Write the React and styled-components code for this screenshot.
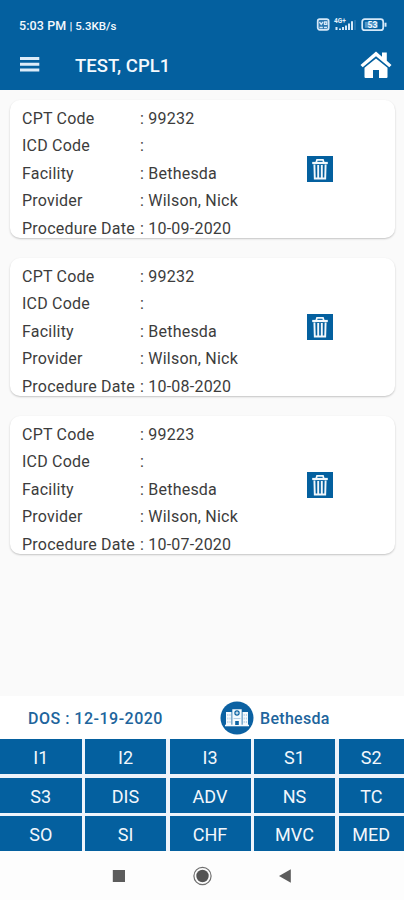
import styled, { createGlobalStyle } from "styled-components";

const GlobalStyle = createGlobalStyle`
  * {
    box-sizing: border-box;
  }

  body {
    margin: 0;
    background: #fafafa;
    font-family: Roboto, "Liberation Sans", sans-serif;
  }

  svg {
    display: block;
    flex: none;
  }
`;

const Screen = styled.div`
  display: flex;
  flex-direction: column;
  width: 100%;
  height: 900px;
  overflow: hidden;
`;

const Header = styled.header`
  height: 90px;
  flex: none;
  color: #f4f9fd;
  background: #04609f;
`;

const StatusBar = styled.div`
  display: flex;
  align-items: center;
  justify-content: space-between;
  height: 40px;
  padding: 10px 16px 0 19px;
`;

const StatusText = styled.span`
  font-size: ${({ small }) => (small ? "11.5px" : "12.5px")};
  font-weight: 500;
  letter-spacing: ${({ small }) => (small ? "0" : "0.1px")};
  white-space: pre;
`;

const StatusLeft = styled.div`
  display: flex;
  align-items: baseline;
`;

const AppBar = styled.div`
  display: flex;
  align-items: center;
  height: 50px;
  padding: 0 12px 0 20px;
`;

const Title = styled.h1`
  flex: 1;
  margin: 2px 0 0 35px;
  font-size: 18.5px;
  line-height: 24px;
  font-weight: 500;
`;

const List = styled.main`
  display: flex;
  flex: 1;
  flex-direction: column;
  gap: 20px;
  padding: 10px 9px 0 10px;
`;

const Card = styled.article`
  display: flex;
  height: 138px;
  padding: 4.5px 0 0 12px;
  border-radius: 10px;
  background: #fff;
  box-shadow: 0 1px 2px rgba(0, 0, 0, 0.22);
`;

const Fields = styled.dl`
  width: 284.5px;
  margin: 0;
`;

const Field = styled.div`
  display: flex;
  height: 27.5px;
  font-size: 16px;
  line-height: 27.5px;
  letter-spacing: 0.22px;
  color: #3c3c3c;
  white-space: nowrap;

  dt {
    width: 118px;
  }

  dd {
    margin: 0;
  }
`;

const DeleteButton = styled.button`
  display: flex;
  align-items: center;
  justify-content: center;
  width: 26px;
  height: 26px;
  margin: 51.5px 0 0;
  padding: 0;
  border: none;
  background: #04609f;
`;

const VisitBar = styled.div`
  display: flex;
  align-items: center;
  height: 43px;
  padding-left: 28px;
  font-size: 16px;
  font-weight: 500;
  letter-spacing: 0.3px;
  color: #20649c;
  background: #fff;
`;

const VisitDate = styled.span`
  width: 192px;
  margin-top: 2px;
  letter-spacing: 0.5px;
  white-space: pre;
`;

const Facility = styled.span`
  margin: 2px 0 0 6px;
`;

const CodeGrid = styled.div`
  display: grid;
  grid-template-columns: 81.5px 81px 81px 81px 1fr;
  grid-template-rows: repeat(3, 35px);
  gap: 3.5px;
  background: #eef4fb;
`;

const CodeButton = styled.button`
  padding: 2px 0 0;
  border: none;
  font-family: inherit;
  font-size: 18px;
  color: #f2f7fc;
  background: #04609f;
`;

const NavBar = styled.nav`
  display: flex;
  align-items: center;
  height: 49px;
  padding: 0 0 0 112px;
  gap: 66px;
  background: #fdfdfd;
`;

const StatusIcons = () => (
  <svg width="72" height="16" viewBox="0 0 72 16" fill="none">
    <rect x="1.7" y="2.2" width="11" height="10.6" rx="2" fill="#2c78b0" stroke="#d5e8f8" strokeWidth="1.7" />
    <path d="M3.5 5l1.7 2.4L7 5M8.5 8V5h2.3v2.3H8.5M3.5 10.5h3.3M8 10.5h3" stroke="#d5e8f8" strokeWidth="1.3" />
    <text x="18" y="6" fontSize="6.5" fontWeight="700" fill="#e3f0fb">4G+</text>
    <path d="M20.5 10v3M24 11.5V13M27 10v3M30 8.5V13M33 6.5V13M36 4.2V13" stroke="#d5e8f8" strokeWidth="2" />
    <path d="M39 3v10" stroke="#4288bd" strokeWidth="1" />
    <rect x="46.2" y="2.2" width="21" height="11" rx="2.5" stroke="#d5e8f8" strokeWidth="1.7" />
    <rect x="48.8" y="4.8" width="13" height="6" fill="#5798c8" />
    <text x="51.5" y="10.8" fontSize="8.5" fontWeight="700" fill="#f0f8ff">53</text>
    <path d="M69.5 5.7v4" stroke="#d5e8f8" strokeWidth="2" />
  </svg>
);

const MenuIcon = () => (
  <svg width="20" height="18" viewBox="0 0 20 18" fill="#dcecf9">
    <path d="M0 1h19.3v3H0zM0 6.7h19.3v3H0zM0 12.4h19.3v3H0z" />
  </svg>
);

const HomeIcon = () => (
  <svg width="32" height="28" viewBox="0 0 32 28" fill="#fff">
    <path d="M16 .5L22 5.7V1.5h4.8v8.3l4.7 4.1-2.2 2.3L16 5.2 2.7 16.2.5 13.9z" />
    <path d="M16 7.5l11.5 9.3V26a1 1 0 0 1-1 1H19v-8h-6v8H5.5a1 1 0 0 1-1-1v-9.2z" />
  </svg>
);

const TrashIcon = () => (
  <svg width="26" height="26" viewBox="0 0 26 26" fill="none" stroke="#f3f8fc">
    <path d="M9.2 6.5L10 3.8h6l.8 2.7" strokeWidth="1.7" />
    <path d="M5.2 7h15.6" strokeWidth="2.2" />
    <path d="M7.4 8.5l.4 14h10.4l.4-14M11.2 9v13M14.8 9v13" strokeWidth="1.9" />
  </svg>
);

const HospitalIcon = () => (
  <svg width="34" height="34" viewBox="0 0 34 34">
    <circle cx="17" cy="17" r="16.5" fill="#0b61a2" />
    <path d="M6 11h5.5v14H6zM22.5 11H28v14h-5.5zM12.3 8.3h9.4V25h-9.4z" fill="#f5f9fd" />
    <path d="M5 24.5h24" stroke="#f5f9fd" strokeWidth="1.6" />
    <path d="M7.8 13v9M10 13v9M24.2 13v9M26.4 13v9" stroke="#b4cee4" strokeWidth="1" strokeDasharray="2 1.5" />
    <circle cx="17" cy="12" r="2.7" fill="#0b61a2" />
    <path d="M17 10.4v3.2M15.4 12h3.2" stroke="#fff" strokeWidth="1" />
    <path d="M15.2 20h3.6v4h-3.6z" fill="#0b61a2" />
    <path d="M13.5 17.5h7" stroke="#b4cee4" />
  </svg>
);

const RecentsIcon = () => (
  <svg width="14" height="14" viewBox="0 0 14 14">
    <path d="M.8 1H13v12H.8z" fill="#5c5c5c" />
  </svg>
);

const CircleIcon = () => (
  <svg width="20" height="20" viewBox="0 0 20 20">
    <circle cx="10.5" cy="10" r="8.6" fill="none" stroke="#707070" strokeWidth="1.2" />
    <circle cx="10.5" cy="10" r="6.2" fill="#555" />
  </svg>
);

const BackIcon = () => (
  <svg width="14" height="14" viewBox="0 0 14 14">
    <path d="M12.8.3v13.4L1 7z" fill="#5c5c5c" />
  </svg>
);

const procedures = [
  { cpt: "99232", date: "10-09-2020" },
  { cpt: "99232", date: "10-08-2020" },
  { cpt: "99223", date: "10-07-2020" },
];

const codes = [
  "I1", "I2", "I3", "S1", "S2",
  "S3", "DIS", "ADV", "NS", "TC",
  "SO", "SI", "CHF", "MVC", "MED",
];

const ProcedureCard = ({ cpt, date }) => {
  const fields = [
    ["CPT Code", cpt],
    ["ICD Code", ""],
    ["Facility", "Bethesda"],
    ["Provider", "Wilson, Nick"],
    ["Procedure Date", date],
  ];

  return (
    <Card>
      <Fields>
        {fields.map(([label, value]) => (
          <Field key={label}>
            <dt>{label}</dt>
            <dd>: {value}</dd>
          </Field>
        ))}
      </Fields>
      <DeleteButton aria-label="Delete">
        <TrashIcon />
      </DeleteButton>
    </Card>
  );
};

const App = () => (
  <>
    <GlobalStyle />
    <Screen>
      <Header>
        <StatusBar>
          <StatusLeft>
            <StatusText>5:03 PM </StatusText>
            <StatusText small>| 5.3KB/s</StatusText>
          </StatusLeft>
          <StatusIcons />
        </StatusBar>
        <AppBar>
          <MenuIcon />
          <Title>TEST, CPL1</Title>
          <HomeIcon />
        </AppBar>
      </Header>
      <List>
        {procedures.map((item) => (
          <ProcedureCard key={item.date} {...item} />
        ))}
      </List>
      <VisitBar>
        <VisitDate>DOS : 12-19-2020</VisitDate>
        <HospitalIcon />
        <Facility>Bethesda</Facility>
      </VisitBar>
      <CodeGrid>
        {codes.map((code) => (
          <CodeButton key={code}>{code}</CodeButton>
        ))}
      </CodeGrid>
      <NavBar>
        <RecentsIcon />
        <CircleIcon />
        <BackIcon />
      </NavBar>
    </Screen>
  </>
);

export default App;
